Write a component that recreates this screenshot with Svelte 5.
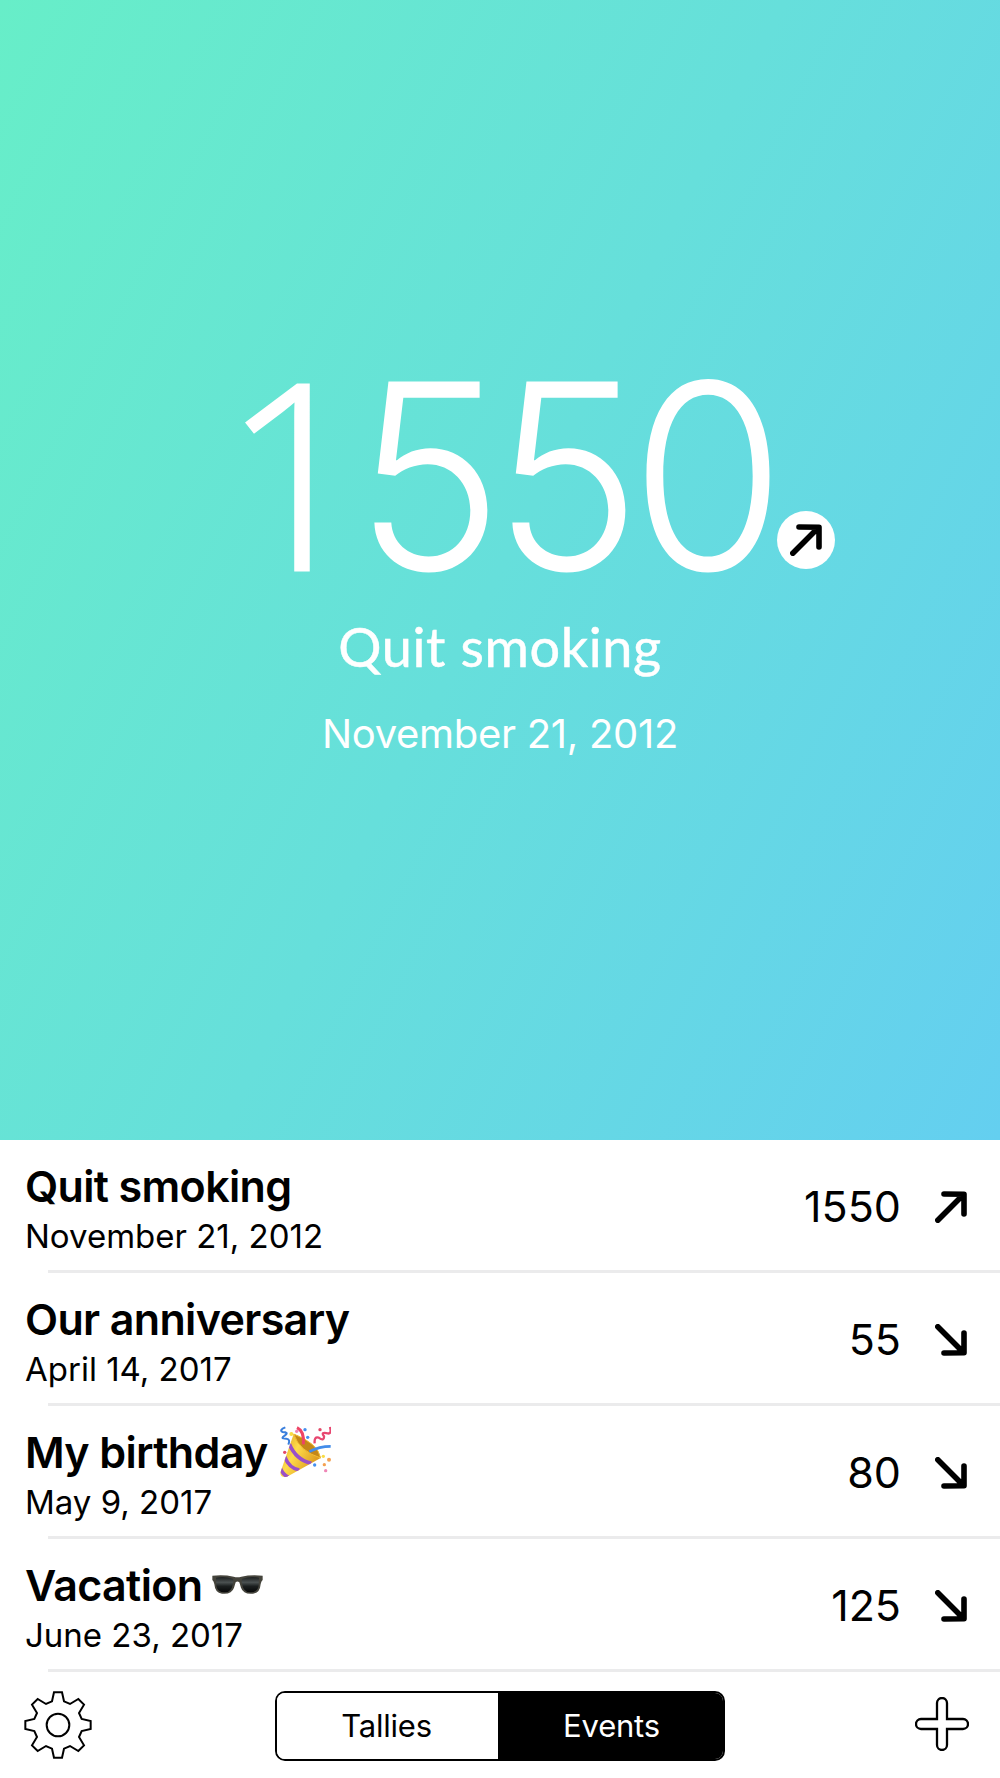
<script>
    let events = $state([
        { name: 'Quit smoking', date: 'November 21, 2012', days: 1550, past: true },
        { name: 'Our anniversary', date: 'April 14, 2017', days: 55, past: false },
        { name: 'My birthday', date: 'May 9, 2017', days: 80, past: false, emoji: 'party' },
        { name: 'Vacation', date: 'June 23, 2017', days: 125, past: false, emoji: 'glasses' },
    ])

    let tabs = ['Tallies', 'Events']
    let active = $state('Events')
    let selected = $state(0)
    let current = $derived(events[selected])
</script>

{#snippet arrow(past)}
    <svg class="arrow" class:down={!past} viewBox="0 0 32 32">
        <path d="M2.8 29.2 L28.5 3.5 M9 3 L29 3.2 V23" />
    </svg>
{/snippet}

<div class="app">
    <section class="hero">
        <div class="count">
            {#each String(current.days) as digit}
                <span class="digit" class:one={digit === '1'}>{digit}</span>
            {/each}
            <div class="badge">{@render arrow(current.past)}</div>
        </div>
        <div class="name">{current.name}</div>
        <div class="when">{current.date}</div>
    </section>

    <div class="list">
        {#each events as event, i}
            <div class="row" role="button" tabindex="-1" onclick={() => selected = i} onkeydown={() => {}}>
                <div class="about">
                    <div class="title">
                        <span>{event.name}</span>
                        {#if event.emoji === 'party'}
                            <svg class="party" viewBox="0 0 153 153">
                                <defs>
                                    <linearGradient id="cone" x1="0" y1="0" x2="1" y2="0.6">
                                        <stop offset="0" stop-color="#d99a1c" />
                                        <stop offset="0.45" stop-color="#ffdc4a" />
                                        <stop offset="1" stop-color="#d9941a" />
                                    </linearGradient>
                                    <clipPath id="coneClip">
                                        <path d="M41 24 L1 140 Q1 156 21 152 L122 96 Q90 40 41 24Z" />
                                    </clipPath>
                                </defs>
                                <path d="M41 24 L1 140 Q1 156 21 152 L122 96 Q90 40 41 24Z" fill="url(#cone)" />
                                <g clip-path="url(#coneClip)" fill="none" stroke="#9a50c8" stroke-width="11">
                                    <path d="M28 54 Q48 102 94 112" />
                                    <path d="M14 92 Q28 128 58 132" />
                                    <path d="M0 124 Q8 146 26 154" />
                                </g>
                                <path d="M41 24 Q58 76 122 96 Q114 52 41 24Z" fill="#c48718" stroke="#f1bd35" stroke-width="3" />
                                <path d="M70 55 Q74 16 51 5" fill="none" stroke="#ee4466" stroke-width="9" />
                                <path d="M88 77 Q118 61 152 61" fill="none" stroke="#438ce9" stroke-width="8" />
                                <path d="M16 4 Q-3 11 7 18 Q28 18 15 28 Q-2 38 19 38 Q32 39 25 56" fill="none" stroke="#397edc" stroke-width="6" />
                                <path d="M104 52 Q102 31 116 35 Q133 47 132 31 Q121 17 143 22 Q156 25 150 3" fill="none" stroke="#e74770" stroke-width="7" />
                                <g fill="#438ff0"><circle cx="75" cy="11" r="5" /><circle cx="83" cy="34" r="5" /><circle cx="104" cy="117" r="5" /></g>
                                <g fill="#f9dc44"><circle cx="34" cy="24" r="6" /><circle cx="130" cy="91" r="5" /></g>
                                <g fill="#ef86b7"><circle cx="50" cy="16" r="5" /><circle cx="137" cy="134" r="5" /></g>
                                <g fill="#e34968"><circle cx="120" cy="11" r="5" /><circle cx="14" cy="79" r="5" /></g>
                                <g fill="#f4a151"><circle cx="147" cy="101" r="6" /><circle cx="133" cy="116" r="5" /></g>
                            </svg>
                        {:else if event.emoji === 'glasses'}
                            <svg class="glasses" viewBox="0 0 153 57">
                                <defs>
                                    <linearGradient id="lens" x1="0" y1="0" x2="0" y2="1">
                                        <stop offset="0" stop-color="#1d2020" />
                                        <stop offset="0.35" stop-color="#4b5151" />
                                        <stop offset="0.6" stop-color="#1b1f1f" />
                                        <stop offset="1" stop-color="#060707" />
                                    </linearGradient>
                                </defs>
                                <path d="M1 2 Q35 -2 65 5 Q76 8 88 5 Q118 -2 152 2 V15 Q148 18 146 27 Q144 54 123 56 Q94 59 87 38 L82 22 Q76 17 71 22 L66 38 Q59 59 30 56 Q9 54 7 27 Q5 18 1 15Z" fill="#45443c" />
                                <path d="M12 8 Q38 3 62 11 Q66 13 63 26 Q58 53 37 52 Q17 52 13 33Z" fill="url(#lens)" />
                                <path d="M141 8 Q115 3 91 11 Q87 13 90 26 Q95 53 116 52 Q136 52 140 33Z" fill="url(#lens)" />
                            </svg>
                        {/if}
                    </div>
                    <div class="date">{event.date}</div>
                </div>
                <div class="days">{event.days}</div>
                {@render arrow(event.past)}
            </div>
        {/each}
    </div>

    <div class="toolbar">
        <svg class="gear" viewBox="-102 -102 204 204">
            <path d="M-12 -98 H12 L18 -71 L36 -63 L61 -78 L78 -61 L63 -36 L71 -18 L98 -12 V12 L71 18 L63 36 L78 61 L61 78 L36 63 L18 71 L12 98 H-12 L-18 71 L-36 63 L-61 78 L-78 61 L-63 36 L-71 18 L-98 12 V-12 L-71 -18 L-63 -36 L-78 -61 L-61 -78 L-36 -63 L-18 -71 Z" />
            <circle r="34" />
        </svg>
        <div class="tabs">
            {#each tabs as tab}
                <button class="tab" class:active={active === tab} onclick={() => active = tab}>{tab}</button>
            {/each}
        </div>
        <svg class="plus" viewBox="0 0 54 54">
            <path d="M22 22 V6 a5 5 0 0 1 10 0 V22 H48 a5 5 0 0 1 0 10 H32 V48 a5 5 0 0 1 -10 0 V32 H6 a5 5 0 0 1 0 -10 Z" />
        </svg>
    </div>
</div>

<style>
    :global(body){
        margin: 0;
        background: #fff;
    }

    .app{
        display: flex;
        flex-direction: column;
        width: 1000px;
        height: 1778px;
        overflow: hidden;
        color: #000;
        font-family: Inter, "Liberation Sans", sans-serif;
    }

    .hero{
        display: flex;
        flex-direction: column;
        align-items: center;
        box-sizing: border-box;
        height: 1140px;
        padding-top: 364px;
        color: #fff;
        background: linear-gradient(116.5deg, #67eec8 0%, #66dfdb 50%, #64cff0 100%);
    }

    .count{
        position: relative;
        display: flex;
        align-items: baseline;
        width: 552px;
        height: 236px;
    }

    .digit{
        width: 138px;
        font-size: 259px;
        font-weight: 300;
        line-height: 212px;
        letter-spacing: -23px;
        text-indent: -10px;
        transform: scaleX(0.97);
    }

    /* plain stem with no foot */
    .digit.one{
        font-family: "Open Sans", sans-serif;
        letter-spacing: -10px;
        text-indent: -2px;
        -webkit-text-stroke: 3px #fff;
        transform: none;
    }

    .badge{
        position: absolute;
        left: 553px;
        top: 147px;
        display: grid;
        place-items: center;
        width: 58px;
        height: 58px;
        border-radius: 50%;
        color: #000;
        background: #fff;
    }

    .name{
        height: 90px;
        font-family: Lato, sans-serif;
        font-size: 54px;
        line-height: 94px;
        letter-spacing: 0.6px;
        -webkit-text-stroke: 0.5px #fff;
    }

    .when{
        font-size: 40px;
        line-height: 88px;
        letter-spacing: -0.3px;
    }

    .arrow{
        width: 32px;
        height: 32px;
        fill: none;
        stroke: #000;
        stroke-width: 5.6;
        stroke-linecap: round;
        stroke-linejoin: round;
    }

    .arrow.down{
        transform: scaleY(-1);
    }

    .row{
        display: flex;
        align-items: center;
        box-sizing: border-box;
        height: 133px;
        padding: 4px 33px 0 25px;
        background: linear-gradient(#ebebec, #ebebec) 48px 100% / 100% 3px no-repeat;
    }

    .about{
        flex: 1;
    }

    .title{
        display: flex;
        align-items: center;
        height: 52px;
        font-size: 43px;
        font-weight: 600;
        line-height: 50px;
        letter-spacing: -0.65px;
    }

    .date{
        height: 46px;
        font-size: 33px;
        line-height: 48px;
    }

    .days{
        margin: -5px 34px 0 0;
        font-size: 43px;
    }

    .row > :global(.arrow){
        margin-top: -4px;
    }

    .party{
        width: 51px;
        height: 51px;
        margin-left: 12px;
    }

    .glasses{
        width: 51px;
        height: 19px;
        margin-left: 10px;
    }

    .toolbar{
        display: flex;
        align-items: center;
        box-sizing: border-box;
        height: 106px;
        padding: 2px 31px 0 24px;
    }

    .gear{
        width: 68px;
        height: 68px;
        margin: 0 183px 2px 0;
        fill: none;
        stroke: #000;
        stroke-width: 6;
    }

    .plus{
        width: 54px;
        height: 54px;
        margin: 0 0 4px auto;
        fill: none;
        stroke: #000;
        stroke-width: 2.3;
    }

    .tabs{
        display: flex;
        box-sizing: border-box;
        width: 450px;
        height: 70px;
        border: 2px solid #000;
        border-radius: 10px;
        overflow: hidden;
    }

    .tab{
        flex: 1;
        padding: 0 2px 2px 0;
        border: 0;
        color: #000;
        background: #fff;
        font-family: inherit;
        font-size: 31px;
        letter-spacing: -0.2px;
    }

    .tab.active{
        flex: 0 0 225px;
        padding: 0 0 2px 2px;
        color: #fff;
        background: #000;
    }
</style>
